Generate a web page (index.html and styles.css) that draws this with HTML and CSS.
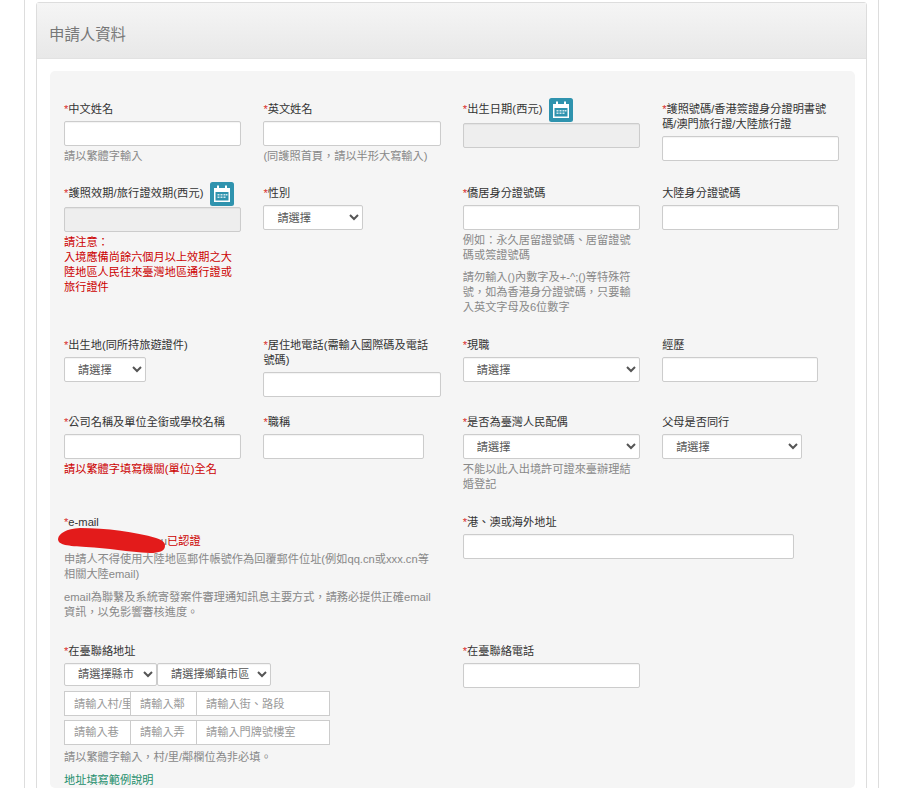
FILE: index.html
```html
<!DOCTYPE html>
<html lang="zh-Hant">
<head>
    <meta charset="UTF-8">
    <title>申請人資料</title>
    <link rel="stylesheet" href="styles.css">
</head>
<body>
<svg class="defs" width="0" height="0">
    <symbol id="cal" viewBox="0 0 24 24">
        <rect width="24" height="24" rx="2.5" fill="#2f93ae"/>
        <path d="M4 6h16v14H4z" fill="#fff"/>
        <path d="M5.500 10h13v8.500h-13z" fill="#2f93ae"/>
        <path d="M7 3.500h2v4H7zM15 3.500h2v4h-2z" fill="#fff"/>
        <path d="M7.500 12h2v1.500h-2zM10.500 12h2v1.500h-2zM13.500 12h2v1.500h-2zM16 12h1.500v1.500H16zM7.500 14.500h2V16h-2zM10.500 14.500h2V16h-2zM13.500 14.500h2V16h-2z" fill="#cfe6ed"/>
    </symbol>
</svg>
<div class="page">
    <div class="panel">
        <div class="panel-head">申請人資料</div>
        <div class="well">

            <div class="row row-first">
                <div class="field">
                    <label class="lbl"><span class="req">*</span>中文姓名</label>
                    <input class="ctl" type="text">
                    <p class="hint">請以繁體字輸入</p>
                </div>
                <div class="field">
                    <label class="lbl"><span class="req">*</span>英文姓名</label>
                    <input class="ctl" type="text">
                    <p class="hint">(同護照首頁，請以半形大寫輸入)</p>
                </div>
                <div class="field">
                    <div class="lbl-icon">
                        <label class="lbl lbl-wide"><span class="req">*</span>出生日期(西元)</label>
                        <svg class="cal"><use href="#cal"/></svg>
                    </div>
                    <input class="ctl" type="text" disabled>
                </div>
                <div class="field">
                    <label class="lbl"><span class="req">*</span>護照號碼/香港簽證身分證明書號碼/澳門旅行證/大陸旅行證</label>
                    <input class="ctl" type="text">
                </div>
            </div>

            <div class="row">
                <div class="field">
                    <div class="lbl-icon">
                        <label class="lbl lbl-wide"><span class="req">*</span>護照效期/旅行證效期(西元)</label>
                        <svg class="cal"><use href="#cal"/></svg>
                    </div>
                    <input class="ctl" type="text" disabled>
                    <p class="warn">請注意：<br>入境應備尚餘六個月以上效期之大陸地區人民往來臺灣地區通行證或旅行證件</p>
                </div>
                <div class="field">
                    <label class="lbl"><span class="req">*</span>性別</label>
                    <select class="ctl w100"><option>請選擇</option></select>
                </div>
                <div class="field">
                    <label class="lbl"><span class="req">*</span>僑居身分證號碼</label>
                    <input class="ctl" type="text">
                    <p class="hint">例如：永久居留證號碼、居留證號碼或簽證號碼</p>
                    <p class="hint hint-next">請勿輸入()內數字及+-^;()等特殊符號，如為香港身分證號碼，只要輸入英文字母及6位數字</p>
                </div>
                <div class="field">
                    <label class="lbl">大陸身分證號碼</label>
                    <input class="ctl" type="text">
                </div>
            </div>

            <div class="row row-tight">
                <div class="field">
                    <label class="lbl"><span class="req">*</span>出生地(同所持旅遊證件)</label>
                    <select class="ctl w82"><option>請選擇</option></select>
                </div>
                <div class="field">
                    <label class="lbl"><span class="req">*</span>居住地電話(需輸入國際碼及電話號碼)</label>
                    <input class="ctl" type="text">
                </div>
                <div class="field">
                    <label class="lbl"><span class="req">*</span>現職</label>
                    <select class="ctl"><option>請選擇</option></select>
                </div>
                <div class="field">
                    <label class="lbl">經歷</label>
                    <input class="ctl w156" type="text">
                </div>
            </div>

            <div class="row">
                <div class="field">
                    <label class="lbl"><span class="req">*</span>公司名稱及單位全銜或學校名稱</label>
                    <input class="ctl" type="text">
                    <p class="warn">請以繁體字填寫機關(單位)全名</p>
                </div>
                <div class="field">
                    <label class="lbl"><span class="req">*</span>職稱</label>
                    <input class="ctl w161" type="text">
                </div>
                <div class="field">
                    <label class="lbl"><span class="req">*</span>是否為臺灣人民配偶</label>
                    <select class="ctl"><option>請選擇</option></select>
                    <p class="hint">不能以此入出境許可證來臺辦理結婚登記</p>
                </div>
                <div class="field">
                    <label class="lbl">父母是否同行</label>
                    <select class="ctl w140"><option>請選擇</option></select>
                </div>
            </div>

            <div class="row row-email">
                <div class="field span2 email-field">
                    <label class="lbl"><span class="req">*</span>e-mail</label>
                    <div class="email-line">
                        <span class="email-addr">u</span><span class="email-ok">已認證</span>
                        <svg class="scribble" viewBox="0 0 108 25" width="108" height="25">
                            <path d="M0 11C1 5 8 1 22 0c26 0 56 4 76 10 6 2 9 4 9 8 0 5-6 7-15 7-22-1-42-5-64-6C10 18 0 17 0 11z" fill="#e31b1b"/>
                        </svg>
                    </div>
                    <p class="hint hint-email">申請人不得使用大陸地區郵件帳號作為回覆郵件位址(例如qq.cn或xxx.cn等相關大陸email)</p>
                    <p class="hint hint-email-next">email為聯繫及系統寄發案件審理通知訊息主要方式，請務必提供正確email資訊，以免影響審核進度。</p>
                </div>
                <div class="field span2">
                    <label class="lbl"><span class="req">*</span>港、澳或海外地址</label>
                    <input class="ctl w331" type="text">
                </div>
            </div>

            <div class="row">
                <div class="field span2">
                    <label class="lbl"><span class="req">*</span>在臺聯絡地址</label>
                    <div class="addr-selects">
                        <select class="ctl w93"><option>請選擇縣市</option></select>
                        <select class="ctl w114"><option>請選擇鄉鎮市區</option></select>
                    </div>
                    <div class="addr-inputs">
                        <input class="addr-s" type="text" placeholder="請輸入村/里">
                        <input class="addr-s" type="text" placeholder="請輸入鄰">
                        <input class="addr-l" type="text" placeholder="請輸入街、路段">
                    </div>
                    <div class="addr-inputs">
                        <input class="addr-s" type="text" placeholder="請輸入巷">
                        <input class="addr-s" type="text" placeholder="請輸入弄">
                        <input class="addr-l" type="text" placeholder="請輸入門牌號樓室">
                    </div>
                    <p class="hint hint-addr">請以繁體字輸入，村/里/鄰欄位為非必填。</p>
                    <a class="link" href="#">地址填寫範例說明</a>
                </div>
                <div class="field">
                    <label class="lbl"><span class="req">*</span>在臺聯絡電話</label>
                    <input class="ctl" type="text">
                </div>
            </div>

        </div>
    </div>
</div>
</body>
</html>
```

FILE: styles.css
```css
html, body {
    margin: 0;
    height: 788px;
    overflow: hidden;
    background: #fff;
}

body {
    font-family: "Liberation Sans", "Noto Sans CJK TC", sans-serif;
    font-size: 11.2px;
    line-height: 15px;
    color: #333;
}

.defs {
    position: absolute;
}

.page {
    width: 831px;
    height: 786px;
    margin-left: 24px;
    padding: 2px 11px 0;
    border-left: 1px solid #ddd;
    border-right: 1px solid #ddd;
    overflow: hidden;
}

.panel {
    border: 1px solid #ddd;
    border-radius: 3px 3px 0 0;
}

.panel-head {
    height: 55px;
    line-height: 63px;
    padding-left: 12px;
    font-size: 15.4px;
    color: #777;
    background: linear-gradient(#f5f5f5, #e8e8e8);
    border-bottom: 1px solid #e2e2e2;
}

.well {
    margin: 12px 11px 0 13px;
    padding: 29.5px 15px 0 14px;
    background: #f5f5f5;
    border-radius: 5px;
}

/* form rows */
.row {
    display: grid;
    grid-template-columns: repeat(4, 177.2px);
    column-gap: 22.2px;
    margin-bottom: 22px;
}

.row-first {
    margin-bottom: 21.5px;
}

.row-tight {
    margin-bottom: 17px;
}

.row-email {
    margin-bottom: 23px;
}

.span2 {
    grid-column: span 2;
}

.field {
    min-width: 0;
}

.lbl {
    display: block;
    margin-bottom: 4px;
    padding: 1px 3px 0 0;
}

.lbl-wide {
    padding-right: 0;
    letter-spacing: .1px;
}

.req {
    color: #d9302f;
}

.lbl-icon {
    display: flex;
    align-items: flex-start;
    gap: 6px;
}

.cal {
    width: 24px;
    height: 24px;
    margin-top: -3px;
    margin-bottom: 1px;
    flex: none;
}

.ctl {
    display: block;
    box-sizing: border-box;
    width: 100%;
    height: 25px;
    padding: 0 9px;
    font-family: inherit;
    font-size: 11.2px;
    color: #555;
    background: #fff;
    border: 1px solid #ccc;
    border-radius: 2px;
    box-shadow: inset 0 1px 1px rgba(0, 0, 0, .05);
}

select.ctl {
    padding-right: 0;
}

.ctl:disabled {
    background: #eee;
}

.w82 { width: 82px; }
.w93 { width: 93px; }
.w100 { width: 100px; }
.w114 { width: 114px; }
.w140 { width: 140px; }
.w156 { width: 156px; }
.w161 { width: 161px; }
.w331 { width: 331px; }

.hint, .warn {
    margin: 3px 0 0;
}

.hint {
    color: #888;
}

.warn {
    color: #c00;
}

.hint-next {
    margin-top: 7px;
}

/* e-mail line with the blacked-out address */
.email-field {
    padding-right: 4.5px;
}

.email-line {
    position: relative;
    display: flex;
    height: 15px;
    margin-top: -.5px;
}

.email-addr {
    width: 103px;
    text-align: right;
    color: #777;
}

.email-ok {
    color: #c00;
}

.scribble {
    position: absolute;
    left: -6px;
    top: -5.5px;
}

.hint-email {
    margin-top: 3px;
}

.hint-email-next {
    margin-top: 8px;
}

/* address */
.addr-selects {
    display: flex;
    margin: 2px 0 5px;
}

.addr-selects .ctl {
    height: 23.5px;
}

.addr-inputs {
    display: flex;
    margin-bottom: 3.5px;
}

.addr-inputs input {
    box-sizing: border-box;
    height: 25px;
    padding: 0 0 0 9px;
    font-family: inherit;
    font-size: 11.2px;
    background: #fff;
    border: 1px solid #ccc;
    margin-left: -1px;
}

.addr-inputs input:first-child {
    margin-left: 0;
}

.addr-inputs input::placeholder {
    color: #999;
}

.addr-s {
    width: 67px;
}

.addr-l {
    width: 134px;
}

.hint-addr {
    margin-top: 5px;
}

.link {
    display: block;
    margin-top: 8px;
    color: #1f8f6d;
    text-decoration: none;
}
```
